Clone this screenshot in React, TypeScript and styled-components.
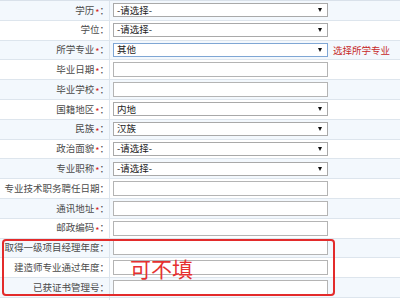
import React from "react";
import styled, { createGlobalStyle } from "styled-components";

const Global = createGlobalStyle`
  html, body { margin: 0; padding: 0; background: #ffffff; }
  body { font-family: "Noto Sans CJK SC", "Noto Sans", sans-serif; }
`;

const Page = styled.div`
  position: relative;
  width: 400px;
  height: 300px;
  overflow: hidden;
  background: #ffffff;
  border-top: 1px solid #d9e1ea;
  box-sizing: border-box;
`;

const Table = styled.div`
  display: flex;
  flex-direction: column;
  width: 400px;
`;

const Row = styled.div<{ $alt: boolean }>`
  display: grid;
  grid-template-columns: 110px 1fr;
  height: 19.8px;
  box-sizing: border-box;
  border-bottom: 1px solid #dde5ed;
  background: ${(p) => (p.$alt ? "#f3f8fd" : "#ffffff")};
`;

const LabelCell = styled.div`
  display: flex;
  align-items: center;
  justify-content: flex-end;
  border-right: 1px solid #dde5ed;
  font-size: 9.5px;
  color: #4a4a4a;
  white-space: nowrap;
  line-height: 1;
`;

const Star = styled.span`
  color: #d42020;
  font-size: 9px;
  margin-left: 1px;
  transform: translateY(1.5px);
`;

const ValueCell = styled.div`
  display: flex;
  align-items: center;
  padding-left: 3px;
  gap: 5px;
`;

const SelectBox = styled.div<{ $focus?: boolean }>`
  width: 215px;
  height: 14px;
  box-sizing: border-box;
  border: 1px solid ${(p) => (p.$focus ? "#7fa6d4" : "#a9a9a9")};
  background: #fff;
  display: flex;
  align-items: center;
  justify-content: space-between;
  padding: 0 5px 0 3px;
  font-size: 9.5px;
  color: #222;
  line-height: 1;
`;

const Arrow = styled.span`
  width: 0;
  height: 0;
  border-left: 2.5px solid transparent;
  border-right: 2.5px solid transparent;
  border-top: 4px solid #111;
`;

const TextBox = styled.div<{ $w?: number }>`
  width: ${(p) => p.$w ?? 215}px;
  height: 15px;
  box-sizing: border-box;
  border: 1px solid #b4b4b4;
  background: #fff;
`;

const Hint = styled.span`
  color: #c62828;
  font-size: 9.5px;
  white-space: nowrap;
`;

const Annotation = styled.div`
  position: absolute;
  left: 2px;
  top: 238px;
  width: 333px;
  height: 57px;
  box-sizing: border-box;
  border: 2px solid #e32b2b;
  border-radius: 4px;
  pointer-events: none;
`;

const AnnotationText = styled.div`
  position: absolute;
  left: 130px;
  top: 257px;
  font-size: 21px;
  line-height: 1;
  color: #e53030;
`;

type Field =
  | { label: string; req: boolean; kind: "select"; value: string; focus?: boolean; hint?: string }
  | { label: string; req: boolean; kind: "text"; w?: number };

const fields: Field[] = [
  { label: "学历", req: true, kind: "select", value: "-请选择-" },
  { label: "学位", req: false, kind: "select", value: "-请选择-" },
  { label: "所学专业", req: true, kind: "select", value: "其他", focus: true, hint: "选择所学专业" },
  { label: "毕业日期", req: true, kind: "text" },
  { label: "毕业学校", req: true, kind: "text" },
  { label: "国籍地区", req: true, kind: "select", value: "内地" },
  { label: "民族", req: true, kind: "select", value: "汉族" },
  { label: "政治面貌", req: true, kind: "select", value: "-请选择-" },
  { label: "专业职称", req: true, kind: "select", value: "-请选择-" },
  { label: "专业技术职务聘任日期", req: false, kind: "text" },
  { label: "通讯地址", req: true, kind: "text" },
  { label: "邮政编码", req: true, kind: "text" },
  { label: "取得一级项目经理年度", req: false, kind: "text" },
  { label: "建造师专业通过年度", req: false, kind: "text" },
  { label: "已获证书管理号", req: false, kind: "text" },
  { label: "", req: false, kind: "text", w: 50 },
];

export default function App() {
  return (
    <>
      <Global />
      <Page>
        <Table>
          {fields.map((f, i) => (
            <Row key={i} $alt={i % 2 === 0}>
              <LabelCell>
                {f.label}
                {f.req && <Star>*</Star>}
                {f.label && "："}
              </LabelCell>
              <ValueCell>
                {f.kind === "select" ? (
                  <>
                    <SelectBox $focus={f.focus}>
                      <span>{f.value}</span>
                      <Arrow />
                    </SelectBox>
                    {f.hint && <Hint>{f.hint}</Hint>}
                  </>
                ) : (
                  <TextBox $w={f.w} />
                )}
              </ValueCell>
            </Row>
          ))}
        </Table>
        <Annotation />
        <AnnotationText>可不填</AnnotationText>
      </Page>
    </>
  );
}
